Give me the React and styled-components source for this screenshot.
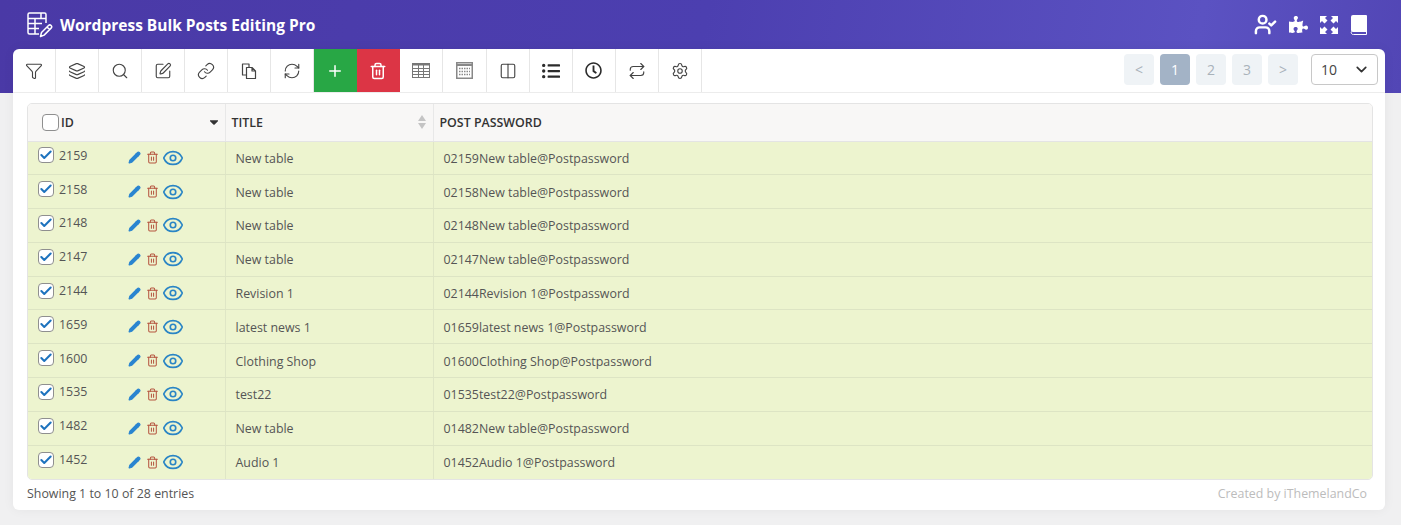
import React from "react"
import styled, { createGlobalStyle } from "styled-components"
import {
  Funnel, Layers, Search, SquarePen, Link, RefreshCw, Plus, Trash2, Columns2, Repeat, Settings,
  UserCheck, ChevronDown, Pencil, Eye, Check,
} from "lucide-react"
import { FaPuzzlePiece, FaListUl, FaRegClock, FaCaretDown } from "react-icons/fa"

const GlobalStyle = createGlobalStyle`
  html, body { margin: 0; padding: 0; }
  body {
    background: #f0f0f1;
    font-family: "Open Sans", "Noto Sans", sans-serif;
    color: #444;
  }
`

const Page = styled.div`
  width: 1401px;
  height: 525px;
  overflow: hidden;
`

const Header = styled.header`
  height: 49px;
  padding: 0 26px 44px;
  box-sizing: content-box;
  display: flex;
  align-items: center;
  justify-content: space-between;
  background: linear-gradient(100deg, #4a39a6 0%, #4c3fb0 50%, #5b52c2 85%, #5246b5 100%);
  color: #fff;
`

const Brand = styled.div`
  display: flex;
  align-items: center;
  gap: 7px;
  font-size: 15.5px;
  font-weight: 700;
`

const HeaderTools = styled.div`
  display: flex;
  align-items: center;
  gap: 12px;
  margin-right: 8px;
`

const Card = styled.main`
  margin: -44px 16px 0 13px;
  height: 461px;
  background: #fff;
  border-radius: 6px;
  box-shadow: 0 0 12px rgba(0, 0, 0, 0.05);
`

const Toolbar = styled.div`
  height: 43px;
  display: flex;
  justify-content: space-between;
  border-bottom: 1px solid #ececec;
`

const ToolGroup = styled.div`
  display: flex;
`

const Tool = styled.button`
  width: 43.05px;
  height: 43px;
  padding: 0;
  border: 0;
  border-right: 1px solid ${({ $fill }) => $fill || "#e6e6e6"};
  background: ${({ $fill }) => $fill || "transparent"};
  color: ${({ $fill, $dark }) => ($fill ? "#fff" : $dark ? "#2b2b2b" : "#444")};
  display: flex;
  align-items: center;
  justify-content: center;
  &:first-child { border-top-left-radius: 6px; }
`

const Pager = styled.div`
  display: flex;
  align-items: center;
  gap: 6px;
  padding: 0 7px 2px 0;
`

const PageButton = styled.span`
  width: 30px;
  height: 31px;
  border-radius: 4px;
  background: ${({ $active }) => ($active ? "#a3b3c6" : "#eff3f6")};
  color: ${({ $active }) => ($active ? "#fff" : "#a9b2ba")};
  font-size: 14px;
  display: flex;
  align-items: center;
  justify-content: center;
`

const PerPage = styled.div`
  width: 67px;
  height: 31px;
  margin-left: 7px;
  padding: 0 7px 0 9px;
  box-sizing: border-box;
  border: 1px solid #c8c8c8;
  border-radius: 4px;
  display: flex;
  align-items: center;
  justify-content: space-between;
  font-size: 14px;
  color: #444;
`

const TableWrap = styled.div`
  margin: 10px 12px 0 14px;
  border: 1px solid #e4e4e4;
  border-radius: 5px;
  overflow: hidden;
`

const Table = styled.table`
  width: 100%;
  border-collapse: collapse;
  table-layout: fixed;
  font-size: 12.4px;
`

const HeadCell = styled.th`
  height: 37px;
  padding: 0 4px 0 ${({ $pad }) => $pad || 6}px;
  box-sizing: border-box;
  background: #f8f7f6;
  border-right: 1px solid #e8e8e8;
  border-bottom: 1px solid #e4e4e4;
  text-align: left;
  font-size: 12.4px;
  font-weight: 600;
  color: #333;
  &:last-child { border-right: 0; }
`

const HeadInner = styled.div`
  display: flex;
  align-items: center;
  justify-content: space-between;
`

const HeadLabel = styled.div`
  display: flex;
  align-items: center;
  gap: 2px;
`

const SortArrows = styled.svg`
  margin-right: 3px;
`

const Box = styled.span`
  width: ${({ $size }) => $size}px;
  height: ${({ $size }) => $size}px;
  box-sizing: border-box;
  flex: none;
  border: 1px solid #8f8f8f;
  border-radius: 4px;
  background: #fff;
  display: flex;
  align-items: center;
  justify-content: center;
  color: #1e73be;
`

const Row = styled.tr`
  height: 33.8px;
  background: #edf4cf;
`

const Cell = styled.td`
  padding: 1px 0 0 10px;
  border-right: 1px solid #dfe6c6;
  border-bottom: 1px solid #dde4c4;
  color: #555;
  box-sizing: border-box;
  &:last-child { border-right: 0; }
  tr:last-child & { border-bottom: 0; }
`

const IdCell = styled(Cell)`
  padding: 0;
`

const IdInner = styled.div`
  display: flex;
  align-items: center;
  padding-left: 10px;
  height: 100%;
  margin-top: -5px;
`

const IdText = styled.span`
  width: 69px;
  margin-left: 5px;
`

const Actions = styled.div`
  display: flex;
  align-items: center;
  gap: 5px;
  margin-top: 5px;
`

const EyeIcon = styled(Eye)`
  margin-left: -2px;
`

const Footer = styled.div`
  display: flex;
  justify-content: space-between;
  padding: 5px 18px 0 14px;
  font-size: 12.4px;
  color: #555;
`

const Credit = styled.span`
  color: #bcbcbc;
`

// logo: small table with a pencil across the corner
const Logo = () => (
  <svg width="27" height="27" viewBox="0 0 27 27" fill="none" stroke="#fff" strokeWidth="1.5" strokeLinejoin="round">
    <path d="M13 23H3.500A1.500 1.500 0 0 1 2 21.500V3.500A1.500 1.500 0 0 1 3.500 2h15A1.500 1.500 0 0 1 20 3.500V12" />
    <path d="M2 7.500h18M2 12.500h14M2 17.500h11M9 7.500V23M15 2v5" />
    <path d="M14.500 25.500l1-4 7-7a1.800 1.800 0 0 1 2.600 2.600l-7 7zM21 16l2.800 2.800" fill="#4a39a6" />
  </svg>
)

// four arrows pointing at the corners, with a gap in the middle
const ExpandIcon = () => (
  <svg width="18" height="18" viewBox="0 0 18 18" fill="#fff">
    <path d="M0 0h7L5 2l2.500 2.500-3 3L2 5 0 7z" />
    <path d="M18 0v7l-2-2-2.500 2.500-3-3L13 2l-2-2z" />
    <path d="M0 18v-7l2 2 2.500-2.500 3 3L5 16l2 2z" />
    <path d="M18 18h-7l2-2-2.500-2.500 3-3L16 13l2-2z" />
  </svg>
)

const BookIcon = () => (
  <svg width="17" height="20" viewBox="0 0 17 20">
    <path d="M3 0h13a1 1 0 0 1 1 1v16H3a2 2 0 0 1-2-2V2a2 2 0 0 1 2-2z" fill="#fff" />
    <path d="M1.500 16.500A2 2 0 0 0 3.500 19.500H16.500V16.500" fill="none" stroke="#fff" strokeWidth="1" />
  </svg>
)

const CopyIcon = () => (
  <svg width="18" height="18" viewBox="0 0 18 18" fill="none" stroke="currentColor" strokeWidth="1.200" strokeLinejoin="round">
    <path d="M6.500 13H2.500V2H9v3.500" />
    <path d="M6.500 5.500h5.500l3.500 3.500v7.500h-9zM12 5.500V9h3.500" />
  </svg>
)

const GridIcon = () => (
  <svg width="18" height="15" viewBox="0 0 18 15" fill="none" stroke="#777" strokeWidth="1">
    <rect x="0.500" y="0.500" width="17" height="14" />
    <path d="M0 1.500h18" strokeWidth="2" />
    <path d="M0 5.500h18M0 8.500h18M0 11.500h18M6.500 2v13M11.500 2v13" />
  </svg>
)

const DottedGridIcon = () => (
  <svg width="17" height="17" viewBox="0 0 17 17" fill="none" stroke="#888">
    <rect x="0.750" y="0.750" width="15.500" height="15.500" strokeWidth="1.500" />
    <path d="M1 3h15" strokeWidth="2" />
    <path d="M3 6.500h11M3 9.500h11M3 12.500h11" strokeDasharray="1.500 1" strokeWidth="1.400" />
  </svg>
)

const ToolIcon = ({ as: Icon, ...rest }) => <Icon size={18} strokeWidth={1.5} {...rest} />

const rows = [
  ["2159", "New table"],
  ["2158", "New table"],
  ["2148", "New table"],
  ["2147", "New table"],
  ["2144", "Revision 1"],
  ["1659", "latest news 1"],
  ["1600", "Clothing Shop"],
  ["1535", "test22"],
  ["1482", "New table"],
  ["1452", "Audio 1"],
]

const App = () => (
  <Page>
    <GlobalStyle />
    <Header>
      <Brand>
        <Logo />
        Wordpress Bulk Posts Editing Pro
      </Brand>
      <HeaderTools>
        <UserCheck size={23} strokeWidth={2.6} />
        <FaPuzzlePiece size={19} />
        <ExpandIcon />
        <BookIcon />
      </HeaderTools>
    </Header>
    <Card>
      <Toolbar>
        <ToolGroup>
          <Tool><ToolIcon as={Funnel} /></Tool>
          <Tool><ToolIcon as={Layers} /></Tool>
          <Tool><ToolIcon as={Search} /></Tool>
          <Tool><ToolIcon as={SquarePen} /></Tool>
          <Tool><ToolIcon as={Link} /></Tool>
          <Tool><CopyIcon /></Tool>
          <Tool><ToolIcon as={RefreshCw} /></Tool>
          <Tool $fill="#28a745"><Plus size={18} strokeWidth={2} /></Tool>
          <Tool $fill="#dc3545"><Trash2 size={18} strokeWidth={2} /></Tool>
          <Tool><GridIcon /></Tool>
          <Tool><DottedGridIcon /></Tool>
          <Tool><ToolIcon as={Columns2} /></Tool>
          <Tool $dark><FaListUl size={18} /></Tool>
          <Tool $dark><FaRegClock size={17} /></Tool>
          <Tool><ToolIcon as={Repeat} /></Tool>
          <Tool><ToolIcon as={Settings} /></Tool>
        </ToolGroup>
        <Pager>
          <PageButton>&lt;</PageButton>
          <PageButton $active>1</PageButton>
          <PageButton>2</PageButton>
          <PageButton>3</PageButton>
          <PageButton>&gt;</PageButton>
          <PerPage>
            10
            <ChevronDown size={17} strokeWidth={2.4} color="#333" />
          </PerPage>
        </Pager>
      </Toolbar>
      <TableWrap>
        <Table>
          <colgroup>
            <col width="197" />
            <col width="208" />
            <col />
          </colgroup>
          <thead>
            <tr>
              <HeadCell $pad={14}>
                <HeadInner>
                  <HeadLabel>
                    <Box $size={17} />
                    ID
                  </HeadLabel>
                  <FaCaretDown size={14} color="#333" />
                </HeadInner>
              </HeadCell>
              <HeadCell>
                <HeadInner>
                  TITLE
                  <SortArrows width="8" height="14" viewBox="0 0 8 14" fill="#c4c4c4">
                    <path d="M4 0l4 6H0zM4 14l4-6H0z" />
                  </SortArrows>
                </HeadInner>
              </HeadCell>
              <HeadCell>POST PASSWORD</HeadCell>
            </tr>
          </thead>
          <tbody>
            {rows.map(([id, title]) => (
              <Row key={id}>
                <IdCell>
                  <IdInner>
                    <Box $size={16}><Check size={14} strokeWidth={3.5} /></Box>
                    <IdText>{id}</IdText>
                    <Actions>
                      <Pencil size={13} strokeWidth={2} color="#2a85d0" fill="#2a85d0" />
                      <Trash2 size={13} strokeWidth={1.9} color="#b5543f" />
                      <EyeIcon size={22} strokeWidth={1.8} color="#2a85c5" />
                    </Actions>
                  </IdInner>
                </IdCell>
                <Cell>{title}</Cell>
                <Cell>{`0${id}${title}@Postpassword`}</Cell>
              </Row>
            ))}
          </tbody>
        </Table>
      </TableWrap>
      <Footer>
        <span>Showing 1 to 10 of 28 entries</span>
        <Credit>Created by iThemelandCo</Credit>
      </Footer>
    </Card>
  </Page>
)

export default App
